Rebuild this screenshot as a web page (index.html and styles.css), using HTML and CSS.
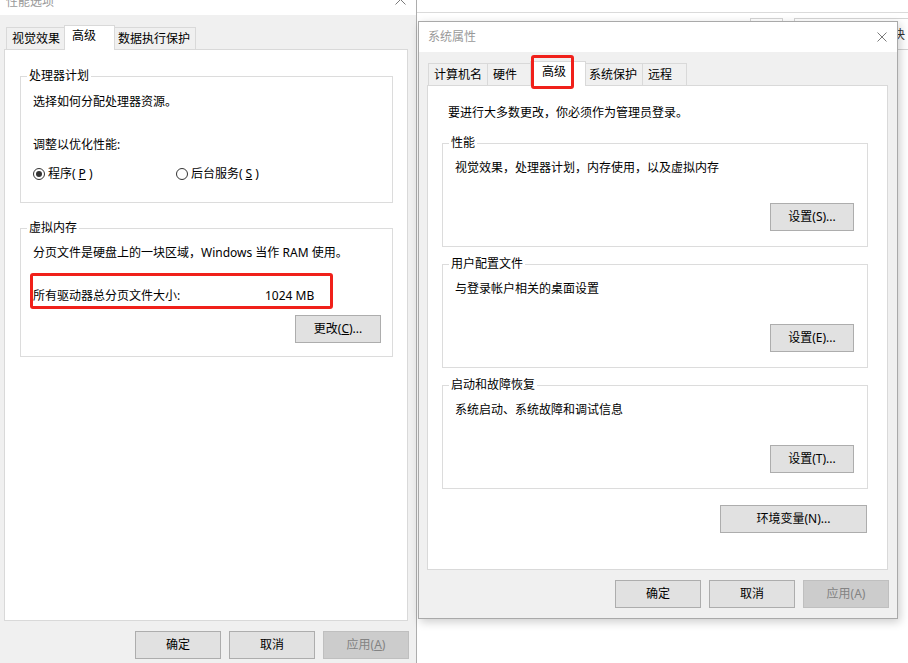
FILE: index.html
```html
<!DOCTYPE html>
<html lang="zh-CN">
<head>
    <meta charset="UTF-8">
    <meta name="viewport" content="width=device-width, initial-scale=1.0">
    <title>系统属性</title>
    <link rel="stylesheet" href="styles.css">
</head>
<body>

    <div class="backwin">
        <div class="backwin-box box-a"></div>
        <div class="backwin-box box-b"></div>
        <span class="backwin-text">决</span>
    </div>

    <!-- 性能选项 -->
    <div class="win perf">
        <div class="titlebar">
            <span class="title">性能选项</span>
            <svg class="close" width="11" height="11" viewBox="0 0 11 11">
                <path d="M0.5 0.5 L10.5 10.5 M10.5 0.5 L0.5 10.5" stroke="#7a7a7a" stroke-width="1" fill="none"/>
            </svg>
        </div>
        <div class="win-body">
            <div class="tabs">
                <div class="tab">视觉效果</div>
                <div class="tab active">高级</div>
                <div class="tab">数据执行保护</div>
            </div>
            <div class="panel">
                <fieldset class="group first">
                    <legend>处理器计划</legend>
                    <div class="group-body">
                        <p class="text lead">选择如何分配处理器资源。</p>
                        <p class="text hint">调整以优化性能:</p>
                        <div class="radios">
                            <label class="radio"><span class="dot on"></span>程序(<u>P</u>)</label>
                            <label class="radio"><span class="dot"></span>后台服务(<u>S</u>)</label>
                        </div>
                    </div>
                </fieldset>
                <fieldset class="group">
                    <legend>虚拟内存</legend>
                    <div class="group-body">
                        <p class="text">分页文件是硬盘上的一块区域，Windows 当作 RAM 使用。</p>
                        <div class="mark">
                            <span class="size-label">所有驱动器总分页文件大小:</span>
                            <span>1024 MB</span>
                        </div>
                        <div class="btn-row">
                            <button class="btn">更改(<u>C</u>)...</button>
                        </div>
                    </div>
                </fieldset>
            </div>
            <div class="actions">
                <button class="btn">确定</button>
                <button class="btn">取消</button>
                <button class="btn" disabled>应用(<u>A</u>)</button>
            </div>
        </div>
    </div>

    <!-- 系统属性 -->
    <div class="win sys">
        <div class="titlebar">
            <span class="title">系统属性</span>
            <svg class="close" width="10" height="10" viewBox="0 0 10 10">
                <path d="M0.5 0.5 L9.5 9.5 M9.5 0.5 L0.5 9.5" stroke="#7a7a7a" stroke-width="1" fill="none"/>
            </svg>
        </div>
        <div class="win-body">
            <div class="tabs">
                <div class="tab">计算机名</div>
                <div class="tab">硬件</div>
                <div class="tab active">高级<span class="mark-tab"></span></div>
                <div class="tab">系统保护</div>
                <div class="tab">远程</div>
            </div>
            <div class="panel">
                <p class="intro">要进行大多数更改，你必须作为管理员登录。</p>

                <fieldset class="group first">
                    <legend>性能</legend>
                    <div class="group-body">
                        <p class="text">视觉效果，处理器计划，内存使用，以及虚拟内存</p>
                        <div class="btn-row">
                            <button class="btn set">设置(S)...</button>
                        </div>
                    </div>
                </fieldset>

                <fieldset class="group">
                    <legend>用户配置文件</legend>
                    <div class="group-body">
                        <p class="text">与登录帐户相关的桌面设置</p>
                        <div class="btn-row">
                            <button class="btn set">设置(E)...</button>
                        </div>
                    </div>
                </fieldset>

                <fieldset class="group">
                    <legend>启动和故障恢复</legend>
                    <div class="group-body">
                        <p class="text">系统启动、系统故障和调试信息</p>
                        <div class="btn-row">
                            <button class="btn set">设置(T)...</button>
                        </div>
                    </div>
                </fieldset>

                <div class="env-row">
                    <button class="btn env">环境变量(N)...</button>
                </div>
            </div>
            <div class="actions">
                <button class="btn">确定</button>
                <button class="btn">取消</button>
                <button class="btn" disabled>应用(A)</button>
            </div>
        </div>
    </div>

</body>
</html>
```

FILE: styles.css
```css
body {
    margin: 0;
    width: 908px;
    height: 663px;
    overflow: hidden;
    position: relative;
    background-color: #fff;
    font-family: "Noto Sans", "Noto Sans CJK SC", sans-serif;
    font-size: 12px;
    line-height: 16px;
    color: #000;
}

p {
    margin: 0;
}

/* window behind the dialogs */
.backwin {
    position: absolute;
    left: 417px;
    right: 0;
    top: 12px;
    height: 40px;
    border-top: 1px solid #dadada;
    background-color: #fff;
}

.backwin-box {
    position: absolute;
    top: 5px;
    height: 30px;
    border: 1px solid #d4d4d4;
}

.box-a {
    left: 333px;
    width: 31px;
}

.box-b {
    left: 377px;
    width: 120px;
}

.backwin-text {
    position: absolute;
    left: 476px;
    top: 14px;
    color: #333;
}

/* dialogs */
.win {
    position: absolute;
    box-sizing: border-box;
    background-color: #f0f0f0;
    display: flex;
    flex-direction: column;
}

.perf {
    left: 0;
    top: -16px;
    width: 417px;
    height: 680px;
    border-right: 1px solid #adadad;
}

.sys {
    left: 418px;
    top: 21px;
    width: 480px;
    height: 598px;
    border: 1px solid #a9a9a9;
    box-shadow: 2px 3px 9px rgba(0, 0, 0, 0.2);
    z-index: 2;
}

.titlebar {
    flex: none;
    display: flex;
    align-items: center;
    justify-content: space-between;
    background-color: #fff;
    color: #999;
}

.perf .titlebar {
    height: 31px;
    padding: 0 10px 0 6px;
}

.perf .title {
    padding-top: 4px;
}

.sys .titlebar {
    height: 30px;
    padding: 0 10px 0 9px;
}

.close {
    display: block;
}

.perf .win-body {
    padding: 10px 8px 0 4px;
}

.sys .win-body {
    padding: 9px 9px 0 8px;
}

/* tabs */
.tabs {
    display: flex;
    align-items: flex-end;
    margin-bottom: -1px;
    position: relative;
    z-index: 1;
}

.perf .tabs {
    margin-left: 2px;
}

.sys .tabs {
    margin-left: 1px;
}

.tab {
    box-sizing: border-box;
    height: 23px;
    min-width: 44px;
    padding: 0 5px;
    border: 1px solid #d9d9d9;
    border-left: none;
    background-color: #f0f0f0;
    line-height: 21px;
    white-space: nowrap;
}

.tab:first-child {
    border-left: 1px solid #d9d9d9;
}

.tab.active {
    position: relative;
    height: 25px;
    margin: 0 -2px;
    padding: 2px 7px 0;
    border-left: 1px solid #d9d9d9;
    border-bottom: none;
    background-color: #fff;
    line-height: 16px;
    z-index: 1;
}

.perf .tab.active {
    min-width: 51px;
}

.sys .tab.active {
    min-width: 56px;
    padding-left: 11px;
}

.mark-tab {
    position: absolute;
    left: 0;
    top: -7px;
    width: 43px;
    height: 34px;
    box-sizing: border-box;
    border: 3px solid #f0201a;
    border-radius: 3px;
}

.panel {
    box-sizing: border-box;
    background-color: #fff;
    border: 1px solid #d9d9d9;
}

.perf .panel {
    height: 572px;
}

.sys .panel {
    height: 485px;
}

/* group boxes */
.group {
    margin: 0;
    padding: 0;
    min-width: 0;
    border: 1px solid #dcdcdc;
}

.group legend {
    padding: 0 2px;
    margin-left: 6px;
    line-height: 16px;
}

.perf .group {
    margin: 17px 14px 0 15px;
}

.perf .group.first {
    margin-top: 18px;
}

.perf .group-body {
    padding: 0 11px 13px 12px;
}

.perf .group.first .group-body {
    padding-bottom: 20px;
}

.sys .group {
    margin: 9px 19px 0 14px;
}

.sys .group.first {
    margin-top: 14px;
}

.sys .group-body {
    padding: 0 13px 15px 12px;
}

.text {
    margin-top: 9px;
}

.text.lead {
    margin-top: 10px;
}

.text.hint {
    margin-top: 27px;
}

.intro {
    margin: 19px 0 0 20px;
}

.radios {
    display: flex;
    margin-top: 13px;
}

.radio {
    display: flex;
    align-items: center;
    gap: 3px;
}

.radio:first-child {
    width: 143px;
}

.dot {
    box-sizing: border-box;
    width: 12px;
    height: 12px;
    border: 1px solid #333;
    border-radius: 50%;
    display: flex;
    align-items: center;
    justify-content: center;
}

.dot.on::after {
    content: "";
    width: 6px;
    height: 6px;
    border-radius: 50%;
    background-color: #333;
}

/* red annotation around the page file size */
.mark {
    display: flex;
    width: 303px;
    box-sizing: border-box;
    margin: 12px 0 0 -3px;
    padding: 12px 0 2px 0;
    border: 3px solid #f0201a;
    border-radius: 3px;
}

.size-label {
    width: 232px;
}

/* buttons */
.btn {
    box-sizing: border-box;
    width: 86px;
    height: 28px;
    padding: 0;
    border: 1px solid #adadad;
    background-color: #e1e1e1;
    font-family: inherit;
    font-size: 12px;
    line-height: 16px;
    color: #000;
}

.btn:disabled {
    background-color: #cccccc;
    border-color: #bfbfbf;
    color: #838383;
}

.btn.set {
    width: 84px;
}

.btn.env {
    width: 147px;
}

.btn-row {
    display: flex;
    justify-content: flex-end;
}

.perf .btn-row {
    margin-top: 6px;
}

.sys .btn-row {
    margin-top: 27px;
}

.env-row {
    display: flex;
    justify-content: flex-end;
    margin-top: 16px;
    padding-right: 20px;
}

.actions {
    display: flex;
    justify-content: flex-end;
    gap: 8px;
    margin: 10px -1px 0 0;
}
```
